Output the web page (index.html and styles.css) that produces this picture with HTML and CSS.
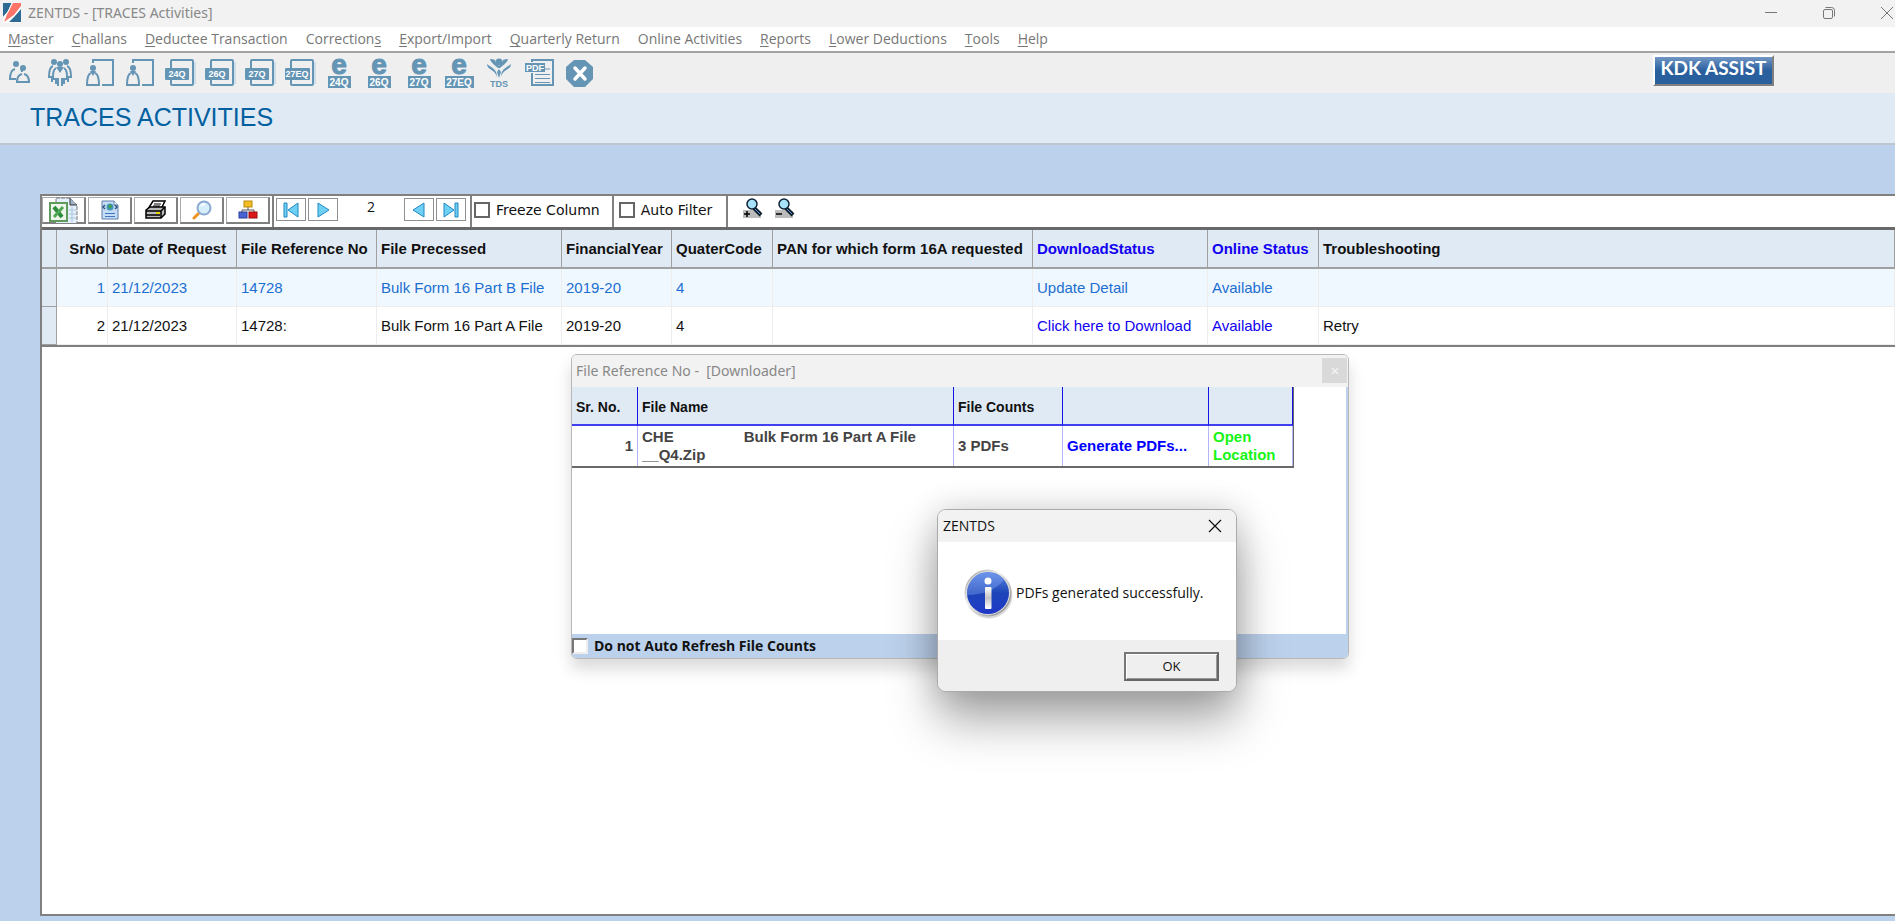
FILE: index.html
```html
<!DOCTYPE html>
<html lang="en">
<head>
<meta charset="UTF-8">
<meta name="viewport" content="width=device-width, initial-scale=1.0">
<title>ZENTDS - [TRACES Activities]</title>
<link rel="stylesheet" href="styles.css">
</head>
<body>
    <header class="titlebar">
        <svg class="app-logo" width="18" height="20" viewBox="0 0 18 20">
            <path d="M0 0h9L5 8 0 14zM18 6v13H6l6-6z" fill="#2d6a94"/>
            <path d="M10 0h8v3l-7 9-10 7 4-10z" fill="#ff7468"/>
            <path d="M9 0 5 9 0 15M18 4l-6 8-11 8" fill="none" stroke="#fff" stroke-width="1"/>
        </svg>
        <span class="window-title">ZENTDS - [TRACES Activities]</span>
        <div class="window-controls">
            <button type="button" aria-label="Minimize"><svg width="12" height="12" viewBox="0 0 12 12"><path d="M0 5.500h12"/></svg></button>
            <button type="button" aria-label="Restore"><svg width="12" height="12" viewBox="0 0 12 12"><rect x=".5" y="2.500" width="9" height="9" rx="1.500"/><path d="M2.500 .5h6a3 3 0 0 1 3 3v6"/></svg></button>
            <button type="button" aria-label="Close"><svg width="12" height="12" viewBox="0 0 12 12"><path d="M0 0l12 12M12 0L0 12"/></svg></button>
        </div>
    </header>

    <nav class="menubar">
        <a href="#"><u>M</u>aster</a>
        <a href="#"><u>C</u>hallans</a>
        <a href="#"><u>D</u>eductee Transaction</a>
        <a href="#">Correction<u>s</u></a>
        <a href="#"><u>E</u>xport/Import</a>
        <a href="#"><u>Q</u>uarterly Return</a>
        <a href="#">Online Activities</a>
        <a href="#"><u>R</u>eports</a>
        <a href="#"><u>L</u>ower Deductions</a>
        <a href="#"><u>T</u>ools</a>
        <a href="#"><u>H</u>elp</a>
    </nav>

    <div class="toolbar">
        <button type="button" class="tool" aria-label="Deductors"><svg viewBox="0 0 32 30">
            <path class="line" d="M12 21H6c0-6 1-9 5-10M17 11c1 1 1 2 1 3M18 16c-4 1-5 4-5 8h12c0-4-1-7-5-8"/>
            <circle class="fill" cx="12" cy="6" r="3"/><circle class="fill" cx="19" cy="10" r="3"/>
        </svg></button>
        <button type="button" class="tool" aria-label="Deductees"><svg viewBox="0 0 32 30">
            <path class="line" d="M9 8c-3 1-4 4-4 11h3v5M23 8c3 1 4 4 4 11h-3v5M12 10c-3 2-3 5-3 11h3v5M20 10c3 2 3 5 3 11h-3v5M14 20v8M18 20v8"/>
            <path class="fill" d="M12 9h8l-4 6z"/><circle class="fill" cx="10" cy="4" r="3"/><circle class="fill" cx="22" cy="4" r="3"/><circle class="fill" cx="16" cy="6" r="3"/>
        </svg></button>
        <button type="button" class="tool" aria-label="Employee"><svg viewBox="0 0 32 30">
            <path class="line" d="M9 5V2h20v25H18M7 15c-3 1-4 5-4 12h12c0-7-1-11-4-12"/><path class="fill" d="M6 13h6l-3 5z"/><circle class="fill" cx="9" cy="10" r="3"/>
        </svg></button>
        <button type="button" class="tool" aria-label="Employee details"><svg viewBox="0 0 32 30">
            <path class="line" d="M9 5V2h20v25H18M7 15c-3 1-4 5-4 12h12c0-7-1-11-4-12"/><path class="fill" d="M6 13h6l-3 5z"/><circle class="fill" cx="9" cy="10" r="3"/>
        </svg></button>
        <button type="button" class="tool"><svg viewBox="0 0 32 30">
            <path class="shade" d="M31 4v22"/><rect class="line" x="7" y="2" width="22" height="25" rx="1"/><rect class="fill" x="1" y="10" width="24" height="12" rx="1"/><text x="13" y="19">24Q</text>
        </svg></button>
        <button type="button" class="tool"><svg viewBox="0 0 32 30">
            <path class="shade" d="M31 4v22"/><rect class="line" x="7" y="2" width="22" height="25" rx="1"/><rect class="fill" x="1" y="10" width="24" height="12" rx="1"/><text x="13" y="19">26Q</text>
        </svg></button>
        <button type="button" class="tool"><svg viewBox="0 0 32 30">
            <path class="shade" d="M31 4v22"/><rect class="line" x="7" y="2" width="22" height="25" rx="1"/><rect class="fill" x="1" y="10" width="24" height="12" rx="1"/><text x="13" y="19">27Q</text>
        </svg></button>
        <button type="button" class="tool"><svg viewBox="0 0 32 30">
            <path class="shade" d="M31 4v22"/><rect class="line" x="7" y="2" width="22" height="25" rx="1"/><rect class="fill" x="1" y="10" width="25" height="12" rx="1"/><text x="13" y="19">27EQ</text>
        </svg></button>
        <button type="button" class="tool"><svg viewBox="0 0 32 30">
            <text x="15" y="16" class="e">e</text><rect class="fill" x="4" y="18" width="23" height="12"/><text x="15" y="28" class="big">24Q</text>
        </svg></button>
        <button type="button" class="tool"><svg viewBox="0 0 32 30">
            <text x="15" y="16" class="e">e</text><rect class="fill" x="4" y="18" width="23" height="12"/><text x="15" y="28" class="big">26Q</text>
        </svg></button>
        <button type="button" class="tool"><svg viewBox="0 0 32 30">
            <text x="15" y="16" class="e">e</text><rect class="fill" x="4" y="18" width="23" height="12"/><text x="15" y="28" class="big">27Q</text>
        </svg></button>
        <button type="button" class="tool"><svg viewBox="0 0 32 30">
            <text x="15" y="16" class="e">e</text><rect class="fill" x="1" y="18" width="29" height="12"/><text x="15" y="28" class="big">27EQ</text>
        </svg></button>
        <button type="button" class="tool"><svg viewBox="0 0 32 30">
            <circle class="fill" cx="15" cy="4" r="3.500"/><path class="fill" d="M11 2C9 1 7 1 6 1c1 4 5 6 8 9h2c3-3 7-5 8-9-1 0-3 0-5 1-1 4-3 5-4 6-1-1-3-2-4-6zM3 6c0 6 8 5 10 13C13 11 8 10 3 6zM27 6c0 6-8 5-10 13 0-8 5-9 10-13zM15 11l-2 3 2 6 2-6z"/><text x="15" y="29" class="tds">TDS</text>
        </svg></button>
        <button type="button" class="tool"><svg viewBox="0 0 32 30">
            <path class="line" d="M8 4V2h21v25H8V15"/><rect class="fill" x="1" y="5" width="20" height="9"/><text x="11" y="13">PDF</text><path class="thin" d="M21 11h5M11 16.500h15M11 20.500h15M11 24.500h15"/>
        </svg></button>
        <button type="button" class="tool" aria-label="Exit"><svg viewBox="0 0 32 30">
            <path class="fill" d="M10 2h11l8 7v12l-8 8H10l-8-8V9z"/><path d="M11 10l10 11M21 10L11 21" stroke="#fff" stroke-width="3.500" stroke-linecap="round"/>
        </svg></button>
        <button type="button" class="assist">KDK ASSIST</button>
    </div>

    <h1 class="page-title">TRACES ACTIVITIES</h1>

    <main class="grid-panel">
        <div class="grid-tools">
            <div class="export-group">
                <button type="button" class="tile" aria-label="Export to Excel"><svg width="30" height="26" viewBox="0 0 30 26">
                    <path d="M7 1h14l7 7v18H7z" fill="#e4f0fb"/><path d="M7 6V1h14l7 7v18" stroke="#777" stroke-dasharray="4 1"/><path d="M21 1v7h7" fill="#9fb4c8" stroke="#333"/><path d="M20 13h7M20 17h7M20 21h7M23 10v15" stroke="#a9c4dd"/>
                    <rect x="1" y="6" width="17" height="18" fill="#eef6ec" stroke="#5f9b5c" stroke-width="2"/><path d="M5 10l8 10" stroke="#2d8a3a" stroke-width="4"/><path d="M14 10L5 20" stroke="#4fa653" stroke-width="3"/>
                </svg></button>
                <button type="button" class="tile" aria-label="Export to HTML"><svg width="20" height="20" viewBox="0 0 20 20">
                    <path d="M2 1h12l4 4v14H2z" fill="#c5dcf6" stroke="#5c7fab"/><path d="M14 1v4h4" fill="#fff" stroke="#5c7fab"/><path d="M5 5L3 7l2 2M15 5l2 2-2 2" fill="none" stroke="#31577e" stroke-width="1.500"/><circle cx="10" cy="7" r="3.500" fill="#3e94bb"/><path d="M8 6l3-2 1 3-3 2z" fill="#46a049"/><path d="M5 13.500h10M5 16.500h10" stroke="#4175bd"/>
                </svg></button>
                <button type="button" class="tile" aria-label="Print"><svg width="22" height="20" viewBox="0 0 22 20">
                    <path d="M8 1h12l-4 8H3z" fill="#fff" stroke="#000" stroke-width="1.500"/><path d="M9 4h7M8 6h7" stroke="#000"/><path d="M1 10l4-3h15v7l-4 4H1z" fill="#bbb" stroke="#000" stroke-width="1.500"/><path d="M1 11h15l4-4M16 11v7M1 15h14" stroke="#000" stroke-width="1.500" fill="none"/><path d="M11 13h4" stroke="#e8d900" stroke-width="2"/>
                </svg></button>
                <button type="button" class="tile" aria-label="Preview"><svg width="20" height="20" viewBox="0 0 20 20">
                    <path d="M7 13l-5 5" stroke="#ef9320" stroke-width="3" stroke-linecap="round"/><circle cx="12" cy="8" r="6.500" fill="#d7effd" stroke="#8aa8d0" stroke-width="2"/><path d="M9 6c1-2 3-2 4-2" stroke="#fff" stroke-width="2" fill="none"/>
                </svg></button>
                <button type="button" class="tile" aria-label="Group"><svg width="20" height="20" viewBox="0 0 20 20">
                    <path d="M10 6v4M4 13v-3h12v3" stroke="#555" fill="none"/><rect x="6" y="1" width="8" height="6" fill="#f4bd23" stroke="#b98a10"/><rect x="1" y="12" width="8" height="6" fill="#4863d2" stroke="#2a3f9e"/><rect x="11" y="12" width="8" height="6" fill="#dc1717" stroke="#990c0c"/>
                </svg></button>
            </div>
            <div class="pager">
                <button type="button" class="step" aria-label="First"><svg width="18" height="16" viewBox="0 0 18 16"><path d="M2 1h3v14H2zM16 1v14L6 8z"/></svg></button>
                <button type="button" class="step" aria-label="Next"><svg width="18" height="16" viewBox="0 0 18 16"><path d="M4 1v14l11-7z"/></svg></button>
                <output class="row-count">2</output>
                <button type="button" class="step" aria-label="Previous"><svg width="18" height="16" viewBox="0 0 18 16"><path d="M14 1v14L3 8z"/></svg></button>
                <button type="button" class="step" aria-label="Last"><svg width="18" height="16" viewBox="0 0 18 16"><path d="M2 1v14l10-7zM13 1h3v14h-3z"/></svg></button>
            </div>
            <label class="option freeze"><input type="checkbox">Freeze Column</label>
            <label class="option filter"><input type="checkbox">Auto Filter</label>
            <div class="zoom-group">
                <button type="button" aria-label="Zoom in"><svg width="22" height="22" viewBox="0 0 22 22">
                    <path d="M2 13h8l10 1v7H2z" fill="#bbb"/><path d="M13 11l7 7" stroke="#10202c" stroke-width="4"/><path d="M14 12l5 5" stroke="#5b97d8" stroke-width="1"/><circle cx="11" cy="7" r="5" fill="#a6e3fb" stroke="#123" stroke-width="1.500"/><path d="M3 17h6M6 14v6" stroke="#000" stroke-width="1.500"/>
                </svg></button>
                <button type="button" aria-label="Zoom out"><svg width="22" height="22" viewBox="0 0 22 22">
                    <path d="M2 13h8l10 1v7H2z" fill="#bbb"/><path d="M13 11l7 7" stroke="#10202c" stroke-width="4"/><path d="M14 12l5 5" stroke="#5b97d8" stroke-width="1"/><circle cx="11" cy="7" r="5" fill="#a6e3fb" stroke="#123" stroke-width="1.500"/><path d="M3 17h6" stroke="#000" stroke-width="1.500"/>
                </svg></button>
            </div>
        </div>

        <table class="requests">
            <colgroup>
                <col class="c-mark"><col class="c-sr"><col class="c-date"><col class="c-ref"><col class="c-file"><col class="c-year"><col class="c-quarter"><col class="c-pan"><col class="c-download"><col class="c-online"><col>
            </colgroup>
            <thead>
                <tr>
                    <th></th>
                    <th class="num">SrNo</th>
                    <th>Date of Request</th>
                    <th>File Reference No</th>
                    <th>File Precessed</th>
                    <th>FinancialYear</th>
                    <th>QuaterCode</th>
                    <th>PAN for which form 16A requested</th>
                    <th class="link">DownloadStatus</th>
                    <th class="link">Online Status</th>
                    <th>Troubleshooting</th>
                </tr>
            </thead>
            <tbody>
                <tr class="selected">
                    <td></td>
                    <td class="num">1</td>
                    <td>21/12/2023</td>
                    <td>14728</td>
                    <td>Bulk Form 16 Part B File</td>
                    <td>2019-20</td>
                    <td>4</td>
                    <td></td>
                    <td><a href="#">Update Detail</a></td>
                    <td><a href="#">Available</a></td>
                    <td></td>
                </tr>
                <tr>
                    <td></td>
                    <td class="num">2</td>
                    <td>21/12/2023</td>
                    <td>14728:</td>
                    <td>Bulk Form 16 Part A File</td>
                    <td>2019-20</td>
                    <td>4</td>
                    <td></td>
                    <td class="link"><a href="#">Click here to Download</a></td>
                    <td class="link"><a href="#">Available</a></td>
                    <td>Retry</td>
                </tr>
            </tbody>
        </table>
    </main>

    <section class="downloader" role="dialog" aria-label="Downloader">
        <div class="downloader-title">
            <span>File Reference No -&nbsp; [Downloader]</span>
            <button type="button" aria-label="Close"><svg width="8" height="8" viewBox="0 0 8 8"><path d="M1 1l6 6M7 1L1 7" stroke="#f2f2f2" stroke-width="1.500"/></svg></button>
        </div>
        <div class="downloader-body">
            <table class="files">
                <thead>
                    <tr>
                        <th class="f-sr">Sr. No.</th>
                        <th class="f-name">File Name</th>
                        <th class="f-count">File Counts</th>
                        <th class="f-pdf"></th>
                        <th class="f-open"></th>
                    </tr>
                </thead>
                <tbody>
                    <tr>
                        <td class="num">1</td>
                        <td>CHE<span class="part">Bulk Form 16 Part A File</span><br>__Q4.Zip</td>
                        <td>3 PDFs</td>
                        <td><a class="generate" href="#">Generate PDFs...</a></td>
                        <td><a class="open" href="#">Open<br>Location</a></td>
                    </tr>
                </tbody>
            </table>
        </div>
        <label class="downloader-foot"><input type="checkbox">Do not Auto Refresh File Counts</label>
    </section>

    <section class="message" role="alertdialog" aria-label="ZENTDS">
        <div class="message-title">
            <span>ZENTDS</span>
            <button type="button" aria-label="Close"><svg width="14" height="14" viewBox="0 0 14 14"><path d="M1 1l12 12M13 1L1 13" stroke="#111" stroke-width="1.200"/></svg></button>
        </div>
        <div class="message-body">
            <svg width="50" height="50" viewBox="0 0 50 50">
                <defs>
                    <linearGradient id="ring" x1="0" y1="0" x2="1" y2="1"><stop offset="0" stop-color="#8a8a8a"/><stop offset=".4" stop-color="#f4f4f4"/><stop offset="1" stop-color="#777"/></linearGradient>
                    <linearGradient id="ball" x1="0" y1="0" x2="0" y2="1"><stop offset="0" stop-color="#5a86e4"/><stop offset=".5" stop-color="#1d45b8"/><stop offset="1" stop-color="#1f38c8"/></linearGradient>
                    <linearGradient id="stem" x1="0" y1="0" x2="0" y2="1"><stop offset="0" stop-color="#fff"/><stop offset=".5" stop-color="#c4c4c8"/><stop offset="1" stop-color="#fff"/></linearGradient>
                </defs>
                <circle cx="25" cy="26" r="23.500" fill="#000" opacity=".15"/>
                <circle cx="24" cy="24" r="23.500" fill="url(#ring)"/>
                <circle cx="24" cy="24" r="22" fill="#dcdcdc"/>
                <circle cx="24" cy="24" r="21" fill="url(#ball)"/>
                <path d="M3 26a21 21 0 0 1 37-15c-8 10-22 15-37 15z" fill="#8fb2f5" opacity=".35"/>
                <circle cx="24" cy="12" r="3.500" fill="#fff"/>
                <rect x="21" y="18" width="6.500" height="22" rx="1" fill="url(#stem)"/>
            </svg>
            <p>PDFs generated successfully.</p>
        </div>
        <div class="message-foot">
            <button type="button" class="ok">OK</button>
        </div>
    </section>
</body>
</html>
```
FILE: styles.css
```css
* {
    box-sizing: border-box;
}

body {
    display: flex;
    flex-direction: column;
    min-height: 100vh;
    margin: 0;
    overflow: hidden;
    background-color: #bcd1ec;
    font-family: "Liberation Sans", Arial, sans-serif;
    font-size: 15px;
    color: #111;
}

button {
    margin: 0;
    padding: 0;
    border: none;
    background: none;
    font-family: inherit;
    color: inherit;
}

a {
    color: inherit;
    text-decoration: none;
}

svg {
    display: block;
    flex: none;
    fill: none;
}

/* title bar */
.titlebar {
    display: flex;
    align-items: center;
    gap: 7px;
    height: 27px;
    padding: 0 2px 2px 3px;
    background-color: #f2f2f2;
    font-family: "Noto Sans", "Open Sans", sans-serif;
    font-size: 14px;
    color: #888;
}

.app-logo {
    background-color: #fff;
}

.window-controls {
    display: flex;
    gap: 46px;
    margin-left: auto;
}

.window-controls svg {
    stroke: #777;
}

/* menu */
.menubar {
    display: flex;
    gap: 18px;
    height: 26px;
    padding-left: 8px;
    border-bottom: 2px solid #a3a3a3;
    background-color: #fff;
    font-family: "Open Sans", sans-serif;
    font-size: 14px;
    line-height: 24px;
    color: #777;
    white-space: nowrap;
}

.menubar u {
    text-underline-offset: 2px;
}

/* toolbar */
.toolbar {
    display: flex;
    align-items: flex-start;
    height: 40px;
    background-color: #efefef;
}

.tool {
    width: 40px;
    padding: 5px 4px;
}

.tool svg {
    width: 32px;
    height: 30px;
    overflow: visible;
}

.tool .line,
.tool .thin,
.tool .shade {
    fill: none;
    stroke: #6495b5;
    stroke-width: 2;
}

.tool .thin {
    stroke-width: 1;
}

.tool .shade {
    stroke: #cfdde7;
}

.tool .fill {
    fill: #6495b5;
}

.tool text {
    fill: #fff;
    font-size: 9px;
    font-weight: bold;
    text-anchor: middle;
}

.tool .big {
    font-size: 10px;
}

.tool .tds {
    fill: #6495b5;
    font-size: 9px;
}

.tool .e {
    fill: #6495b5;
    stroke: #6495b5;
    stroke-width: 1;
    font-size: 28px;
}

.assist {
    width: 121px;
    height: 31px;
    margin: 2px 121px 0 auto;
    padding-bottom: 6px;
    border: 2px solid;
    border-color: #fff #808080 #808080 #fff;
    background: linear-gradient(#7196c4, #2a5f9e 50%, #2a5f9e);
    font-family: Lato, sans-serif;
    font-size: 19px;
    font-weight: bold;
    line-height: 20px;
    color: #fff;
}

.page-title {
    height: 52px;
    margin: 0;
    padding-left: 30px;
    border-bottom: 2px solid #bfc5cd;
    background-color: #e0eaf4;
    font-size: 25px;
    font-weight: normal;
    line-height: 48px;
    color: #00609f;
}

/* request grid */
.grid-panel {
    flex: 1;
    margin: 49px 0 5px 40px;
    border: 2px solid #808080;
    border-right: none;
    background-color: #fff;
}

.grid-tools {
    display: flex;
    height: 34px;
    border-bottom: 3px solid #696969;
    font-family: "DejaVu Sans", Verdana, sans-serif;
    font-size: 14px;
}

.export-group {
    display: flex;
    align-items: flex-start;
    gap: 2px;
    padding: 1px 2px 0 0;
    border-right: 2px solid #808080;
}

.tile {
    display: flex;
    align-items: center;
    justify-content: center;
    width: 44px;
    height: 27px;
    border: 1px solid #aaa;
    border-right: 2px solid #808080;
    border-bottom: 2px solid #808080;
}

.pager {
    display: flex;
    align-items: flex-start;
    gap: 2px;
    padding: 2px 4px 0 2px;
    border-right: 2px solid #808080;
}

.step {
    display: flex;
    align-items: center;
    justify-content: center;
    width: 30px;
    height: 23px;
    border: 1px solid #909090;
}

.step svg {
    fill: #6fd0f5;
    stroke: #2387c2;
}

.row-count {
    width: 62px;
    font-family: "Open Sans", sans-serif;
    font-size: 14px;
    line-height: 18px;
    text-align: center;
}

.option {
    display: flex;
    align-items: center;
    gap: 6px;
    padding: 0 12px 4px 2px;
    border-right: 2px solid #808080;
}

.option input {
    appearance: none;
    width: 16px;
    height: 16px;
    margin: 0;
    border: 2px solid #666;
}

.filter {
    padding-left: 5px;
    padding-right: 14px;
}

.zoom-group {
    display: flex;
    align-items: flex-start;
    gap: 10px;
    padding: 1px 0 0 13px;
}

table {
    border-collapse: separate;
    border-spacing: 0;
    table-layout: fixed;
}

th,
td {
    padding: 0 4px;
    overflow: hidden;
    text-align: left;
}

.num {
    text-align: right;
}

.requests {
    width: 100%;
    border-bottom: 2px solid #808080;
    white-space: nowrap;
}

.requests th,
.requests td {
    height: 38px;
    border-right: 1px solid #ededed;
    border-bottom: 1px solid #ededed;
    font-size: 15px;
}

.requests th {
    height: 39px;
    background-color: #e0eaf4;
    border-right: 1px solid #a0a0a0;
    border-bottom: 2px solid #a0a0a0;
}

.requests td:first-child {
    background-color: #e0eaf4;
    border-right: 1px solid #a0a0a0;
    border-bottom: 1px solid #a0a0a0;
}

.requests .num {
    padding-right: 2px;
}

.requests .selected td {
    background-color: #f0f8ff;
    color: #1c6fd0;
}

.requests .selected td:first-child {
    background-color: #e0eaf4;
}

.requests .link {
    color: #1100f0;
}

.c-mark { width: 15px; }
.c-sr { width: 51px; }
.c-date { width: 129px; }
.c-ref { width: 140px; }
.c-file { width: 185px; }
.c-year { width: 110px; }
.c-quarter { width: 101px; }
.c-pan { width: 260px; }
.c-download { width: 175px; }
.c-online { width: 111px; }

/* downloader window */
.downloader {
    position: absolute;
    top: 354px;
    left: 571px;
    display: flex;
    flex-direction: column;
    width: 778px;
    height: 305px;
    overflow: hidden;
    border: 1px solid #b8b8b8;
    border-radius: 6px;
    background-color: #fff;
    box-shadow: 0 10px 16px rgba(0, 0, 0, 0.15);
}

.downloader-title {
    display: flex;
    align-items: center;
    justify-content: space-between;
    height: 32px;
    padding: 0 1px 1px 4px;
    background-color: #f2f2f2;
    font-family: "Noto Sans", "Open Sans", sans-serif;
    font-size: 14px;
    color: #888;
}

.downloader-title button {
    display: flex;
    align-items: center;
    justify-content: center;
    width: 25px;
    height: 25px;
    background-color: #d9d9d9;
}

.downloader-body {
    flex: 1;
    border-right: 2px solid #bcd1ec;
}

.files {
    width: 722px;
    border-right: 1px solid #696969;
    border-bottom: 2px solid #696969;
    font-size: 15px;
    font-weight: bold;
    line-height: 18px;
    color: #444;
}

.files th {
    height: 39px;
    padding-top: 2px;
    border-right: 1px solid #1414e6;
    border-bottom: 2px solid #4040f0;
    background-color: #e0eaf4;
    font-size: 14px;
    color: #111;
}

.files td {
    height: 40px;
    border-right: 1px solid #b4b4f8;
}

.f-sr { width: 66px; }
.f-name { width: 316px; }
.f-count { width: 109px; }
.f-pdf { width: 146px; }

.part {
    margin-left: 70px;
}

.generate {
    color: #0000ff;
}

.open {
    color: #14f514;
}

.downloader-foot {
    display: flex;
    align-items: center;
    gap: 6px;
    height: 24px;
    padding-bottom: 1px;
    background-color: #bcd1ec;
    font-family: "Open Sans", sans-serif;
    font-size: 14px;
    font-weight: bold;
}

.downloader-foot input {
    appearance: none;
    width: 16px;
    height: 16px;
    margin: 0;
    border: 2px solid;
    border-color: #777 #eee #eee #777;
    background-color: #fff;
}

/* message box */
.message {
    position: absolute;
    top: 509px;
    left: 937px;
    width: 300px;
    overflow: hidden;
    border: 1px solid #aaa;
    border-radius: 9px;
    background-color: #fff;
    box-shadow: 0 28px 48px rgba(0, 0, 0, 0.35), 0 0 32px rgba(0, 0, 0, 0.15);
    font-family: "Open Sans", sans-serif;
    font-size: 14px;
}

.message-title {
    display: flex;
    align-items: center;
    justify-content: space-between;
    height: 32px;
    padding: 0 14px 1px 5px;
    background-color: #f2f2f2;
}

.message-body {
    display: flex;
    align-items: center;
    gap: 2px;
    height: 98px;
    padding: 6px 0 0 26px;
}

.message-body p {
    margin: 0 0 4px;
}

.message-foot {
    display: flex;
    justify-content: flex-end;
    height: 51px;
    padding: 12px 17px;
    background-color: #efefef;
}

.ok {
    width: 95px;
    height: 29px;
    padding-bottom: 2px;
    border: 2px solid;
    border-color: #777 #666 #666 #777;
    box-shadow: inset 1px 1px #fff, inset -1px -1px #999;
    font-size: 13px;
}
```
